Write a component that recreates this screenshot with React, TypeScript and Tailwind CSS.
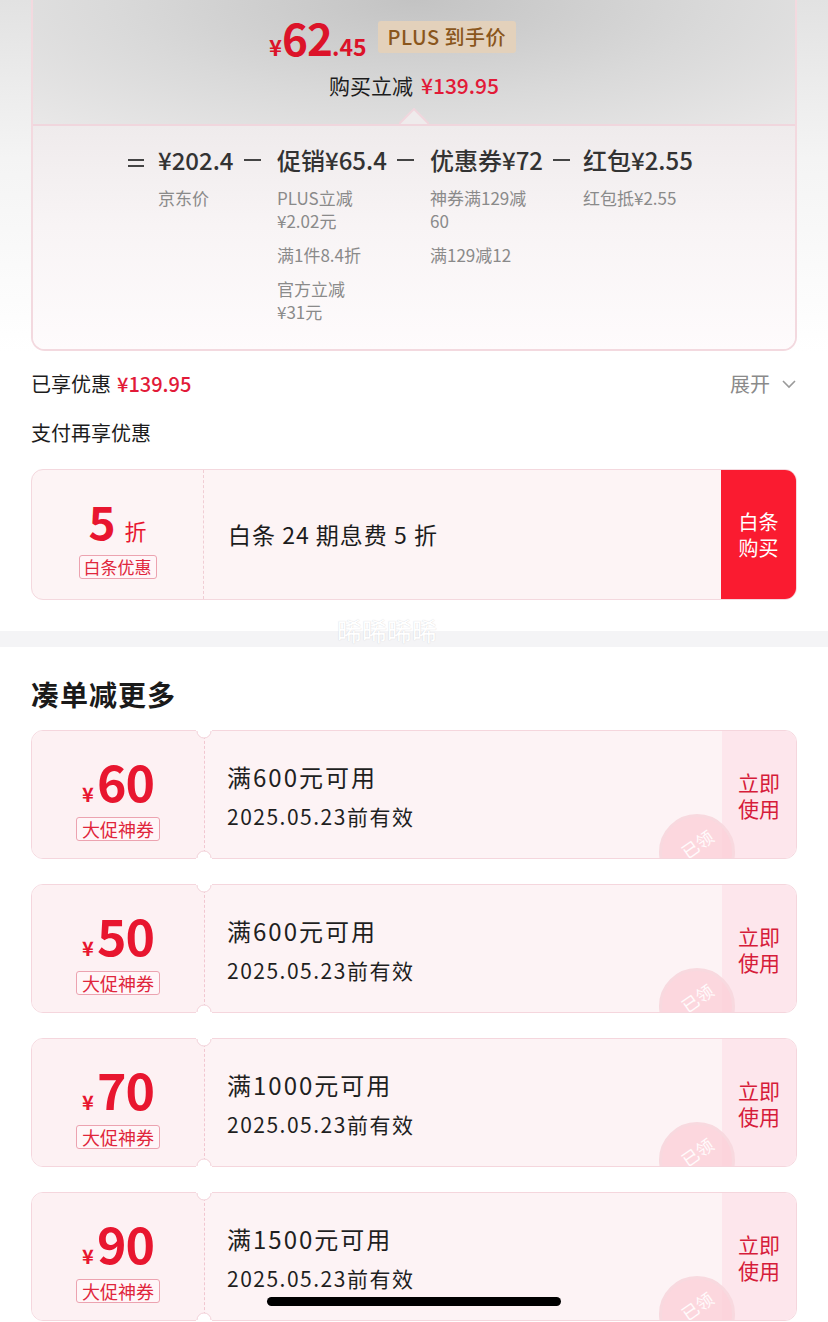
import React from "react";

const font = "font-['Noto_Sans_CJK_SC','Noto_Sans',sans-serif]";

const coupons = [
    { amount: "60", cond: "满600元可用" },
    { amount: "50", cond: "满600元可用" },
    { amount: "70", cond: "满1000元可用" },
    { amount: "90", cond: "满1500元可用" },
];

function Minus() {
    return <span className="ml-[10px] inline-block h-[2px] w-[17px] bg-[#444]" />;
}

function Notch({ bottom }: { bottom?: boolean }) {
    // half circle cut into the coupon edge
    return (
        <svg
            width="16"
            height="9"
            viewBox="0 0 16 9"
            className={bottom ? "absolute bottom-0 left-[165px] rotate-180" : "absolute top-0 left-[165px]"}
        >
            <path d="M0 0 L0 1 L1 1 A7 7 0 0 0 15 1 L16 1 L16 0 Z" fill="#ffffff" />
            <path d="M1 1 A7 7 0 0 0 15 1" fill="none" stroke="#f3d3da" strokeWidth="1" />
        </svg>
    );
}

function Coupon({ amount, cond }: { amount: string; cond: string }) {
    return (
        <div className="relative mx-[31px] h-[129px]">
            <div className="relative flex h-full overflow-hidden rounded-[12px] border border-[#f5d6dd]">
                {/* amount */}
                <div className="flex w-[172px] flex-col items-center justify-center bg-[#fdf1f3] pt-[6px]">
                    <div className="flex items-baseline leading-none text-[#e8162f]">
                        <span className="mr-[3px] text-[20px] font-bold">¥</span>
                        <span className="text-[50px] font-bold tracking-[-1px]">{amount}</span>
                    </div>
                    <span className="mt-[12px] rounded-[3px] border border-[#eca3b0] bg-[#fff6f8] px-[5px] text-[18px] leading-[22px] text-[#e0263c]">
                        大促神券
                    </span>
                </div>
                {/* condition */}
                <div className="relative flex flex-1 flex-col justify-center border-l border-dashed border-[#f1c7d0] bg-[#fdf3f5] pl-[22px] pt-[2px]">
                    <span className="text-[24px] leading-[32px] tracking-[2px] text-[#1f1f1f]">{cond}</span>
                    <span className="mt-[9px] text-[21px] leading-[28px] tracking-[1.5px] text-[#1f1f1f]">2025.05.23前有效</span>
                </div>
                {/* action */}
                <div className="flex w-[74px] flex-col items-center justify-center bg-[#fde6ec] text-[21px] leading-[26px] text-[#d61c3a]">
                    <span>立即</span>
                    <span>使用</span>
                </div>
                {/* claimed stamp */}
                <div className="absolute left-[627px] top-[83px] flex h-[76px] w-[76px] items-center justify-center rounded-full border-[3px] border-[#f8d9df] bg-[#fbcfd8]/80">
                    <span className="mb-[16px] -rotate-[35deg] text-[17px] text-white/90">已领</span>
                </div>
            </div>
            <Notch />
            <Notch bottom />
        </div>
    );
}

export default function App() {
    return (
        <div className={`relative h-[1322px] w-[828px] overflow-hidden bg-white ${font}`}>
            {/* top area */}
            <div className="bg-[linear-gradient(180deg,#e2e2e2_0%,#f4f4f4_45%,#ffffff_100%)] pb-[1px]">
                <div className="mx-[31px] overflow-hidden rounded-b-[14px] border-x-2 border-b-2 border-[#f3d9df]">
                    {/* headline */}
                    <div className="relative h-[126px] border-b-2 border-[#f0d6dd] bg-[radial-gradient(ellipse_at_50%_0%,#c3c3c3_0%,#d9d9d9_55%,#e9e8e8_100%)]">
                        <div className="flex h-[40px] items-center pl-[236px] pt-[34px]">
                            <div className="flex items-baseline leading-none text-[#dc1329]">
                                <span className="text-[22px] font-bold">¥</span>
                                <span className="text-[44px] font-bold tracking-[-1px]">62</span>
                                <span className="text-[23px] font-bold">.45</span>
                            </div>
                            <span className="ml-[11px] rounded-[3px] bg-[#e3d1bb] px-[10px] text-[20px] leading-[32px] font-medium tracking-[0.5px] text-[#8a561c]">
                                PLUS 到手价
                            </span>
                        </div>
                        <div className="mt-[31px] flex justify-center text-[21px] leading-[28px]">
                            <span className="text-[#1c1c1c]">购买立减</span>
                            <span className="ml-[8px] font-medium text-[#e21a38]">¥139.95</span>
                        </div>
                        <svg width="30" height="18" viewBox="0 0 30 18" className="absolute bottom-[-2px] left-[366px]">
                            <path d="M0 16 L15 1 L30 16" fill="#efebec" stroke="#f0d6dd" strokeWidth="2" />
                        </svg>
                    </div>
                    {/* price breakdown */}
                    <div className="bg-[linear-gradient(180deg,#efebec_0%,#f8f4f5_45%,#fefbfc_100%)] pb-[26px] pt-[19px]">
                        <div className="flex pl-[95px]">
                            <span className="mr-[14px] mt-[14px] flex h-[8px] w-[16px] flex-col justify-between">
                                <span className="h-[2px] w-full bg-[#444]" />
                                <span className="h-[2px] w-full bg-[#444]" />
                            </span>
                            <div className="w-[119px]">
                                <div className="flex h-[30px] items-center text-[24px] font-medium text-[#333]">
                                    ¥202.4
                                    <Minus />
                                </div>
                                <div className="mt-[11px] text-[17px] leading-[23px] text-[#8a8a8a]">京东价</div>
                            </div>
                            <div className="w-[153px]">
                                <div className="flex h-[30px] items-center text-[24px] font-medium text-[#333]">
                                    促销¥65.4
                                    <Minus />
                                </div>
                                <div className="mt-[11px] flex flex-col gap-[11px] text-[17px] leading-[23px] text-[#8a8a8a]">
                                    <span>
                                        PLUS立减
                                        <br />
                                        ¥2.02元
                                    </span>
                                    <span>满1件8.4折</span>
                                    <span>
                                        官方立减
                                        <br />
                                        ¥31元
                                    </span>
                                </div>
                            </div>
                            <div className="w-[153px]">
                                <div className="flex h-[30px] items-center text-[24px] font-medium text-[#333]">
                                    优惠券¥72
                                    <Minus />
                                </div>
                                <div className="mt-[11px] flex flex-col gap-[11px] text-[17px] leading-[23px] text-[#8a8a8a]">
                                    <span>
                                        神券满129减
                                        <br />
                                        60
                                    </span>
                                    <span>满129减12</span>
                                </div>
                            </div>
                            <div>
                                <div className="flex h-[30px] items-center text-[24px] font-medium text-[#333]">红包¥2.55</div>
                                <div className="mt-[11px] text-[17px] leading-[23px] text-[#8a8a8a]">红包抵¥2.55</div>
                            </div>
                        </div>
                    </div>
                </div>
            </div>

            {/* savings */}
            <div className="mt-[18px] flex h-[28px] items-center justify-between px-[31px]">
                <div className="flex items-center text-[20px]">
                    <span className="text-[#1c1c1c]">已享优惠</span>
                    <span className="ml-[6px] font-medium text-[#e21a38]">¥139.95</span>
                </div>
                <div className="flex items-center text-[20px] text-[#8a8a8a]">
                    展开
                    <svg width="16" height="10" viewBox="0 0 16 10" className="ml-[11px]">
                        <path d="M2 2 L8 8 L14 2" fill="none" stroke="#9a9a9a" strokeWidth="1.6" />
                    </svg>
                </div>
            </div>
            <div className="mt-[21px] h-[28px] px-[31px] text-[20px] leading-[28px] text-[#1c1c1c]">支付再享优惠</div>

            {/* baitiao */}
            <div className="mx-[31px] mt-[22px] flex h-[131px] overflow-hidden rounded-[12px] border border-[#f4d8de] bg-[#fdf4f5]">
                <div className="flex w-[171px] flex-col items-center justify-center pt-[6px]">
                    <div className="flex items-baseline leading-none text-[#e8162f]">
                        <span className="text-[46px] font-bold">5</span>
                        <span className="ml-[9px] text-[22px]">折</span>
                    </div>
                    <span className="mt-[12px] rounded-[3px] border border-[#eca3b0] bg-[#fff6f8] px-[4px] text-[17px] leading-[22px] text-[#e0263c]">
                        白条优惠
                    </span>
                </div>
                <div className="flex flex-1 items-center border-l border-dashed border-[#f1cdd4] pl-[24px] text-[23px] tracking-[1px] text-[#1c1c1c]">
                    白条 24 期息费 5 折
                </div>
                <div className="flex w-[75px] flex-col items-center justify-center bg-[#fa1b30] text-[20px] leading-[26px] text-white">
                    <span>白条</span>
                    <span>购买</span>
                </div>
            </div>

            {/* divider band with watermark */}
            <div className="relative mt-[31px] h-[16px] bg-[#f4f4f6]">
                <span className="absolute left-[337px] top-[-18px] text-[25px] leading-[34px] text-white [text-shadow:0_0_1px_#c9c9cf]">
                    晞晞晞晞
                </span>
            </div>

            {/* more coupons */}
            <div className="pt-[30px]">
                <div className="h-[34px] px-[31px] text-[28px] font-bold leading-[34px] tracking-[1px] text-[#1a1a1a]">凑单减更多</div>
                <div className="mt-[19px] flex flex-col gap-[25px]">
                    {coupons.map((c, i) => (
                        <Coupon key={i} amount={c.amount} cond={c.cond} />
                    ))}
                </div>
            </div>

            {/* home indicator */}
            <div className="absolute bottom-[16px] left-[267px] h-[9px] w-[294px] rounded-full bg-black" />
        </div>
    );
}
